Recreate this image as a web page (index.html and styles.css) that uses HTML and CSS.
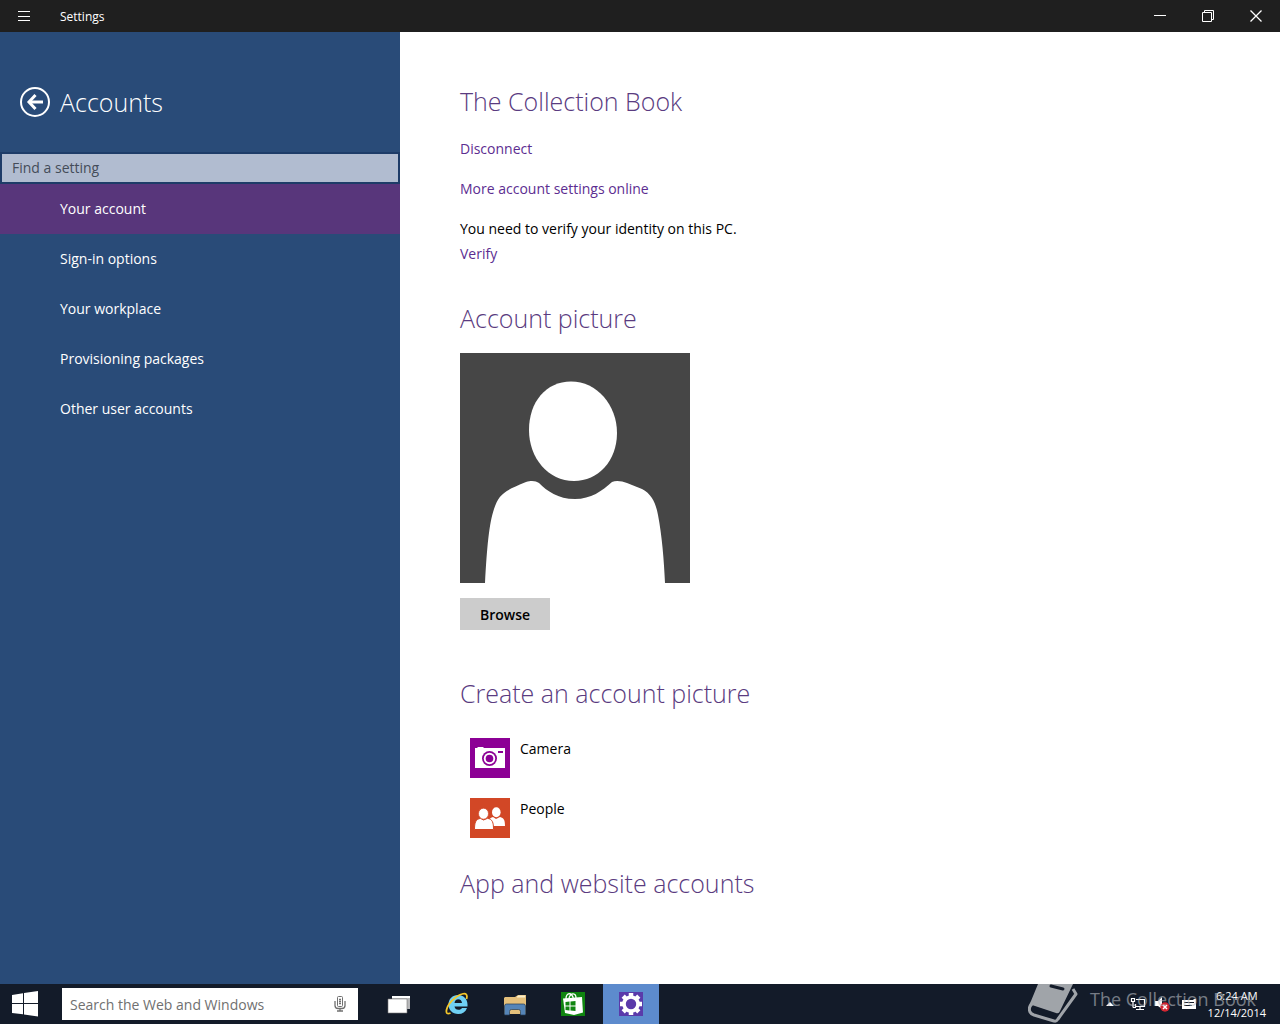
FILE: index.html
```
<!DOCTYPE html>
<html lang="en">
<head>
  <meta charset="UTF-8" />
  <meta name="viewport" content="width=device-width, initial-scale=1.0" />
  <title>Settings</title>
  <link rel="stylesheet" href="styles.css">
</head>
<body>
  <header class="titlebar">
    <button class="title-btn" aria-label="Menu">
      <svg width="12" height="10" viewBox="0 0 12 10" shape-rendering="crispEdges"><path d="M0 .5h12M0 5.5h12M0 9.5h12" stroke="#fff"/></svg>
    </button>
    <span class="app-name">Settings</span>
    <button class="title-btn" aria-label="Minimize">
      <svg width="12" height="12" viewBox="0 0 12 12" shape-rendering="crispEdges"><path d="M0 5.5h12" stroke="#fff"/></svg>
    </button>
    <button class="title-btn" aria-label="Restore">
      <svg width="12" height="12" viewBox="0 0 12 12" fill="none" stroke="#fff"><path d="M.5 2.500h9v9h-9zM2.500 2.500v-2h9v9h-2"/></svg>
    </button>
    <button class="title-btn" aria-label="Close">
      <svg width="12" height="12" viewBox="0 0 12 12"><path d="M.5.5l11 11M11.500.5l-11 11" stroke="#fff" stroke-width="1.300"/></svg>
    </button>
  </header>

  <div class="window">
    <aside class="sidebar">
      <div class="sidebar-head">
        <button class="back" aria-label="Back">
          <svg width="30" height="30" viewBox="0 0 30 30" fill="none" stroke="#fff"><circle cx="15" cy="15" r="14" stroke-width="2"/><path d="M23 15H10" stroke-width="3"/><path d="M15.500 8L9 15l6.500 7" stroke-width="3"/></svg>
        </button>
        <h1>Accounts</h1>
      </div>
      <input class="find" type="search" placeholder="Find a setting" aria-label="Find a setting">
      <nav class="menu">
        <a class="active" href="#">Your account</a>
        <a href="#">Sign-in options</a>
        <a href="#">Your workplace</a>
        <a href="#">Provisioning packages</a>
        <a href="#">Other user accounts</a>
      </nav>
    </aside>

    <main class="content">
      <section class="account">
        <h2>The Collection Book</h2>
        <p><a href="#">Disconnect</a></p>
        <p><a href="#">More account settings online</a></p>
        <p>You need to verify your identity on this PC.<br><a href="#">Verify</a></p>
      </section>

      <section class="picture">
        <h2>Account picture</h2>
        <svg class="avatar" width="230" height="230" viewBox="0 0 230 230">
          <rect width="230" height="230" fill="#464646"/>
          <path fill="#fff" d="M111 28.500C137 28.500 157 52 157 80C157 108 138 128 114 128C88 128 69 105 69 77C69 49 86 28.500 111 28.500Z"/>
          <path fill="#fff" d="M25 230C27 194 29 171 34 156C39 141 44 138 66 129C72 127 76 128 79 130C87 138 98 146 115 146C131 146 142 138 152 129C156 127 162 128 167 130L182 136C192 141 196 151 198 162C202 183 204 207 205 230Z"/>
        </svg>
        <button class="browse">Browse</button>
      </section>

      <section class="create">
        <h2>Create an account picture</h2>
        <a class="app" href="#">
          <svg width="40" height="40" viewBox="0 0 40 40">
            <rect width="40" height="40" fill="#8c0095"/>
            <path fill="#fff" d="M5 10h2l1-1h5l1 1h21v20H5z"/>
            <circle cx="19.500" cy="20.500" r="7.500" fill="#8c0095"/>
            <circle cx="19.500" cy="20.500" r="5.700" fill="#fff"/>
            <circle cx="19.500" cy="20.500" r="3.800" fill="#8c0095"/>
            <path fill="#8c0095" d="M28 13h5v2h-5z"/>
          </svg>
          <span>Camera</span>
        </a>
        <a class="app" href="#">
          <svg width="40" height="40" viewBox="0 0 40 40">
            <rect width="40" height="40" fill="#d24726"/>
            <ellipse cx="26.300" cy="14.300" rx="4.300" ry="5" fill="#fff"/>
            <path fill="#fff" d="M19 28v-5c0-2 1-3 4-4l3 2 4-2c4 1 5 3 5 9z"/>
            <path fill="#fff" stroke="#d24726" d="M4.500 31.500c0-7 1-10 6-11.200l3 1.700 4-1.700c5 1 6 4 6 11.200z"/>
            <ellipse cx="13.500" cy="15.700" rx="5" ry="5.500" fill="#fff" stroke="#d24726" stroke-width=".7"/>
          </svg>
          <span>People</span>
        </a>
      </section>

      <section>
        <h2>App and website accounts</h2>
      </section>
    </main>
  </div>

  <footer class="taskbar">
    <button class="start" aria-label="Start">
      <svg width="26" height="26" viewBox="0 0 26 26" fill="#fff"><path d="M0 4l11-1.700V12H0zM12 2.100L26 0v12H12zM0 13h11v10.300L0 22zM12 13h14v12.500l-14-2z"/></svg>
    </button>
    <div class="web-search">
      <input type="text" placeholder="Search the Web and Windows" aria-label="Search the Web and Windows">
      <button class="mic" aria-label="Speak">
        <svg width="12" height="16" viewBox="0 0 12 16" fill="none" stroke="#707070"><rect x="3.500" y=".5" width="5" height="10" rx="1"/><path d="M5 3.500h2M5 5.500h2M5 7.500h2M1 5v4.500q0 3 3 3h4q3 0 3-3V5M6 12v3M3 15h6" stroke-width="1.300"/></svg>
      </button>
    </div>
    <div class="apps">
      <button class="task" aria-label="Task view">
        <svg width="24" height="24" viewBox="0 0 24 24"><path fill="#b7b8ba" d="M5 4h18v13H5z"/><path fill="#fff" d="M5 4h18v2H5z"/><path fill="#fff" stroke="#777" stroke-width=".6" d="M1 7h19v14H1z"/></svg>
      </button>
      <button class="task" aria-label="Internet Explorer">
        <svg width="24" height="24" viewBox="0 0 24 24">
          <path fill="#6fd0f4" fill-rule="evenodd" d="M13 3C18.500 3 22.500 7 22.500 12.500V14.500H9.500C9.800 16.500 11.300 17.800 13.500 17.800C15.200 17.800 16.300 17.200 17 16H22C20.500 20 17.500 22 13.200 22C7.500 22 3.500 18.200 3.500 12.600C3.500 7 7.500 3 13 3ZM9.500 11H17C16.800 8.600 15.500 7.200 13.300 7.200C11.100 7.200 9.800 8.600 9.500 11Z"/>
          <path fill="none" stroke="#f4c62a" stroke-width="1.800" d="M21.500 7c1.200-4-.2-6.500-4.500-5C10 4 2.500 12.500 1.500 18c-.6 3.500 1 4.500 4 3"/>
        </svg>
      </button>
      <button class="task" aria-label="File Explorer">
        <svg width="24" height="24" viewBox="0 0 24 24"><path fill="#e4bf7a" d="M1 6l1-1h10l3-2h8v19H1z"/><path fill="#fbf0cc" d="M14 4.500l1.500-1H22v2h-8z"/><path fill="#5585b8" stroke="#263d56" stroke-width=".7" d="M1.500 23v-9q0-2 2-2h17q2 0 2 2v9h-5v-3.500q0-2-2-2h-7q-2 0-2 2V23z"/></svg>
      </button>
      <button class="task" aria-label="Store">
        <svg width="24" height="24" viewBox="0 0 24 24"><path fill="#108510" d="M0 0h24v24H0z"/><path fill="#fff" d="M2 6.500L21 5l1 15.500L13 23 4 21z"/><path fill="none" stroke="#fff" stroke-width="1.300" d="M5 7c0-7 6-7 7.500 0M8 6c2-6 7-5 7 0"/><path fill="#108510" d="M4.500 10l4-.5v4h-4zM9.500 9.400l5-.4v4.500h-5zM4.500 14.500h4v4l-4-.5zM9.500 14.500h5V19l-5-.5z"/></svg>
      </button>
      <button class="task current" aria-label="Settings">
        <svg width="24" height="24" viewBox="0 0 24 24"><path fill="#5a3aaa" d="M0 0h24v24H0z"/><g stroke="#fff" fill="none"><circle cx="12" cy="12" r="7" stroke-width="3.600"/><path stroke-width="4.500" d="M12 1v4M12 19v4M1 12h4M19 12h4M4.200 4.200L7 7M17 17l2.800 2.800M4.200 19.800L7 17M17 7l2.800-2.800"/></g></svg>
      </button>
    </div>
    <div class="tray">
      <svg class="chevron" width="8" height="4" viewBox="0 0 8 4"><path fill="#fff" d="M4 0l4 4H0z"/></svg>
      <svg width="16" height="14" viewBox="0 0 16 14" fill="none" stroke="#fff"><path d="M6 2.500h8.500v7h-9V7M10 9.500v3M6 12.500h8M1.500 1.500h3v3h-3zM3 4.500v6M3 10.500h3" stroke-width="1.200"/></svg>
      <svg width="16" height="16" viewBox="0 0 16 16"><path fill="#fff" d="M1 5h3l4-4v12L4 10H1z"/><circle cx="11" cy="11" r="4.700" fill="#d32631"/><path d="M9 9l4 4M13 9l-4 4" stroke="#fff" stroke-width="1.500"/></svg>
      <svg class="keyboard" width="14" height="10" viewBox="0 0 14 10"><path fill="#fff" d="M0 1h11l1-1h2v10H0z"/><path stroke="#151c29" d="M2 3.500h10M2 6.500h8"/></svg>
      <time class="clock" datetime="2014-12-14T06:24">6:24 AM<br>12/14/2014</time>
    </div>
    <div class="watermark">
      <svg width="50" height="40" viewBox="0 0 50 40">
        <path fill="#fff" d="M10 0h35L32 27q-1 3-4 2L4 21q-2 0-3 2 0-3 2-6z"/>
        <path fill="none" stroke="#fff" stroke-width="3" stroke-linejoin="round" d="M4 20Q0 23 2 28q1 2 4 3l20 6q2 1 4-2L48 10l-3-5"/>
        <path stroke="#131b29" stroke-width="3" stroke-linecap="round" d="M23 2l12 3"/>
      </svg>
      <span>The Collection Book</span>
    </div>
  </footer>
</body>
</html>
```
FILE: styles.css
```
* {
  box-sizing: border-box;
}
body {
  margin: 0;
  height: 100vh;
  display: flex;
  flex-direction: column;
  background: #fff;
  color: #000;
  font-family: "Open Sans", "Noto Sans", sans-serif;
  font-size: 14px;
}
button {
  border: none;
  padding: 0;
  background: none;
  font-family: inherit;
}
svg {
  display: block;
}
h1, h2 {
  margin: 0;
  font-size: 25px;
  font-weight: 300;
  line-height: 34px;
}
a {
  color: #5c2d91;
  text-decoration: none;
}

/* title bar */
.titlebar {
  display: flex;
  align-items: center;
  height: 32px;
  flex-shrink: 0;
  background: #1f1f1f;
  color: #fff;
}
.title-btn {
  width: 48px;
  height: 32px;
  display: flex;
  align-items: center;
  justify-content: center;
}
.app-name {
  flex: 1;
  padding-left: 12px;
  font-size: 12px;
}

.window {
  display: flex;
  flex: 1;
  min-height: 0;
}

/* sidebar */
.sidebar {
  width: 400px;
  flex-shrink: 0;
  background: #294b78;
  color: #fff;
}
.sidebar-head {
  display: flex;
  align-items: center;
  gap: 10px;
  height: 120px;
  padding: 20px 20px 0;
}
.find {
  display: block;
  width: 100%;
  height: 32px;
  padding: 0 10px 2px;
  border: 2px solid #1e3c68;
  border-radius: 0;
  background: #b1bcd0;
  font: inherit;
}
.find::placeholder {
  color: #444c59;
}
.menu a {
  display: block;
  padding-left: 60px;
  line-height: 50px;
  color: #fff;
}
.menu .active {
  background: #58367b;
}

/* content */
.content {
  flex: 1;
  padding: 52px 60px 0;
  overflow: hidden;
}
.content h2 {
  color: #5a3b80;
}
.account p {
  margin: 0 0 15px;
  line-height: 25px;
}
.account h2 {
  margin-bottom: 18px;
}
.picture {
  margin-top: 35px;
}
.avatar {
  margin: 18px 0 15px;
}
.browse {
  width: 90px;
  height: 32px;
  background: #ccc;
  font-size: 14px;
  font-weight: 600;
}
.create {
  margin: 46px 0 28px;
}
.create h2 {
  margin-bottom: 28px;
}
.app {
  display: flex;
  gap: 10px;
  margin: 0 0 20px 10px;
  line-height: 22px;
  color: #000;
}

/* taskbar */
.taskbar {
  position: relative;
  display: flex;
  align-items: center;
  height: 40px;
  flex-shrink: 0;
  background: #131b29;
  color: #fff;
}
.start {
  width: 62px;
  padding-left: 12px;
}
.web-search {
  display: flex;
  align-items: center;
  width: 296px;
  height: 32px;
  padding: 0 12px 0 8px;
  background: #fff;
}
.web-search input {
  flex: 1;
  min-width: 0;
  border: none;
  padding: 0;
  font: inherit;
}
.web-search input::placeholder {
  color: #707070;
}
.apps {
  display: flex;
  gap: 2px;
  margin-left: 13px;
}
.task {
  width: 56px;
  height: 40px;
  display: flex;
  align-items: center;
  justify-content: center;
}
.current {
  background: #5d8bcd;
}
.tray {
  display: flex;
  align-items: center;
  gap: 8px;
  margin-left: auto;
  padding-right: 14px;
}
.chevron {
  margin-right: 8px;
}
.keyboard {
  margin: 0 4px;
}
.clock {
  font-size: 11px;
  line-height: 17px;
  text-align: center;
}

/* logo laid over the tray */
.watermark {
  position: absolute;
  right: 24px;
  bottom: 0;
  display: flex;
  gap: 12px;
  height: 40px;
  font-size: 18px;
  line-height: 30px;
  color: #b8bcc2;
  opacity: 0.6;
  pointer-events: none;
}
```
